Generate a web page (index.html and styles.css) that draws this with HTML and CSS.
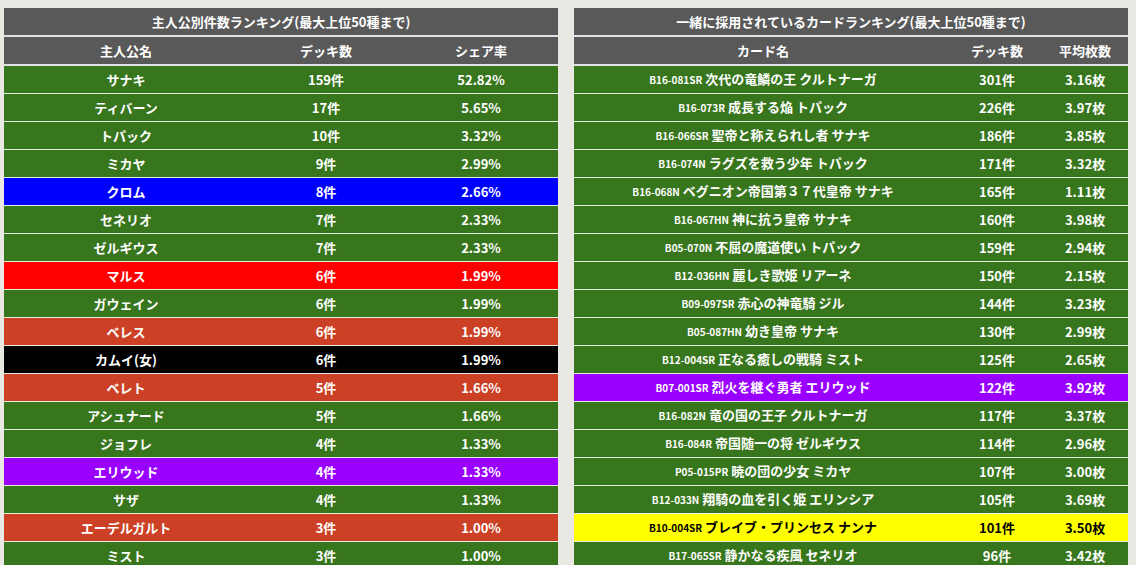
FILE: index.html
```html
<!DOCTYPE html>
<html lang="ja">
<head>
<meta charset="utf-8">
<title>ランキング</title>
<link rel="stylesheet" href="styles.css">
</head>
<body>
<div class="page">
  <table class="rank rank-hero">
    <colgroup><col class="c-hname"><col class="c-hdeck"><col class="c-hshare"></colgroup>
    <thead>
      <tr class="title"><th colspan="3">主人公別件数ランキング(最大上位50種まで)</th></tr>
      <tr class="head"><th>主人公名</th><th>デッキ数</th><th>シェア率</th></tr>
    </thead>
    <tbody>
      <tr class="green"><td>サナキ</td><td>159件</td><td>52.82%</td></tr>
      <tr class="green"><td>ティバーン</td><td>17件</td><td>5.65%</td></tr>
      <tr class="green"><td>トパック</td><td>10件</td><td>3.32%</td></tr>
      <tr class="green"><td>ミカヤ</td><td>9件</td><td>2.99%</td></tr>
      <tr class="blue"><td>クロム</td><td>8件</td><td>2.66%</td></tr>
      <tr class="green"><td>セネリオ</td><td>7件</td><td>2.33%</td></tr>
      <tr class="green"><td>ゼルギウス</td><td>7件</td><td>2.33%</td></tr>
      <tr class="red"><td>マルス</td><td>6件</td><td>1.99%</td></tr>
      <tr class="green"><td>ガウェイン</td><td>6件</td><td>1.99%</td></tr>
      <tr class="brick"><td>ベレス</td><td>6件</td><td>1.99%</td></tr>
      <tr class="black"><td>カムイ(女)</td><td>6件</td><td>1.99%</td></tr>
      <tr class="brick"><td>ベレト</td><td>5件</td><td>1.66%</td></tr>
      <tr class="green"><td>アシュナード</td><td>5件</td><td>1.66%</td></tr>
      <tr class="green"><td>ジョフレ</td><td>4件</td><td>1.33%</td></tr>
      <tr class="purple"><td>エリウッド</td><td>4件</td><td>1.33%</td></tr>
      <tr class="green"><td>サザ</td><td>4件</td><td>1.33%</td></tr>
      <tr class="brick"><td>エーデルガルト</td><td>3件</td><td>1.00%</td></tr>
      <tr class="green"><td>ミスト</td><td>3件</td><td>1.00%</td></tr>
    </tbody>
  </table>

  <table class="rank rank-card">
    <colgroup><col class="c-cname"><col class="c-cdeck"><col class="c-cavg"></colgroup>
    <thead>
      <tr class="title"><th colspan="3">一緒に採用されているカードランキング(最大上位50種まで)</th></tr>
      <tr class="head"><th>カード名</th><th>デッキ数</th><th>平均枚数</th></tr>
    </thead>
    <tbody>
      <tr class="green"><td><span class="code">B16-081SR</span> 次代の竜鱗の王 クルトナーガ</td><td>301件</td><td>3.16枚</td></tr>
      <tr class="green"><td><span class="code">B16-073R</span> 成長する焔 トパック</td><td>226件</td><td>3.97枚</td></tr>
      <tr class="green"><td><span class="code">B16-066SR</span> 聖帝と称えられし者 サナキ</td><td>186件</td><td>3.85枚</td></tr>
      <tr class="green"><td><span class="code">B16-074N</span> ラグズを救う少年 トパック</td><td>171件</td><td>3.32枚</td></tr>
      <tr class="green"><td><span class="code">B16-068N</span> ベグニオン帝国第３７代皇帝 サナキ</td><td>165件</td><td>1.11枚</td></tr>
      <tr class="green"><td><span class="code">B16-067HN</span> 神に抗う皇帝 サナキ</td><td>160件</td><td>3.98枚</td></tr>
      <tr class="green"><td><span class="code">B05-070N</span> 不屈の魔道使い トパック</td><td>159件</td><td>2.94枚</td></tr>
      <tr class="green"><td><span class="code">B12-036HN</span> 麗しき歌姫 リアーネ</td><td>150件</td><td>2.15枚</td></tr>
      <tr class="green"><td><span class="code">B09-097SR</span> 赤心の神竜騎 ジル</td><td>144件</td><td>3.23枚</td></tr>
      <tr class="green"><td><span class="code">B05-087HN</span> 幼き皇帝 サナキ</td><td>130件</td><td>2.99枚</td></tr>
      <tr class="green"><td><span class="code">B12-004SR</span> 正なる癒しの戦騎 ミスト</td><td>125件</td><td>2.65枚</td></tr>
      <tr class="purple"><td><span class="code">B07-001SR</span> 烈火を継ぐ勇者 エリウッド</td><td>122件</td><td>3.92枚</td></tr>
      <tr class="green"><td><span class="code">B16-082N</span> 竜の国の王子 クルトナーガ</td><td>117件</td><td>3.37枚</td></tr>
      <tr class="green"><td><span class="code">B16-084R</span> 帝国随一の将 ゼルギウス</td><td>114件</td><td>2.96枚</td></tr>
      <tr class="green"><td><span class="code">P05-015PR</span> 暁の団の少女 ミカヤ</td><td>107件</td><td>3.00枚</td></tr>
      <tr class="green"><td><span class="code">B12-033N</span> 翔騎の血を引く姫 エリンシア</td><td>105件</td><td>3.69枚</td></tr>
      <tr class="yellow"><td><span class="code">B10-004SR</span> ブレイブ・プリンセス ナンナ</td><td>101件</td><td>3.50枚</td></tr>
      <tr class="green"><td><span class="code">B17-065SR</span> 静かなる疾風 セネリオ</td><td>96件</td><td>3.42枚</td></tr>
    </tbody>
  </table>
</div>
</body>
</html>
```

FILE: styles.css
```css
html, body {
  margin: 0;
  padding: 0;
}
body {
  background: #e9e8e2;
  font-family: "Noto Sans CJK JP", "Noto Sans", sans-serif;
  font-weight: bold;
  font-size: 13px;
  color: #fff;
  overflow: hidden;
}
.page {
  display: flex;
  gap: 16px;
  padding: 8px 8px 0 4px;
  align-items: flex-start;
}
.rank {
  width: 554px;
  border-collapse: collapse;
  table-layout: fixed;
  background: #eef0ee;
}
.c-hname { width: 244px; }
.c-hdeck { width: 156px; }
.c-hshare { width: 154px; }
.c-cname { width: 378px; }
.c-cdeck { width: 90px; }
.c-cavg { width: 86px; }

.rank th,
.rank td {
  padding: 0;
  height: 27px;
  text-align: center;
  vertical-align: middle;
  line-height: 16px;
  white-space: nowrap;
  font-weight: bold;
}
.rank th {
  background: #595959;
  color: #fff;
  border-bottom: 2px solid #dfdfe6;
}
.rank td {
  border-bottom: 1px solid #e6eee2;
}
.code {
  font-size: 10px;
}
.green td { background: #38761d; }
.blue td { background: #0000ff; }
.red td { background: #ff0000; }
.brick td { background: #cc4125; }
.black td { background: #000000; }
.purple td { background: #9900ff; }
.yellow td { background: #ffff00; color: #000; }
```
